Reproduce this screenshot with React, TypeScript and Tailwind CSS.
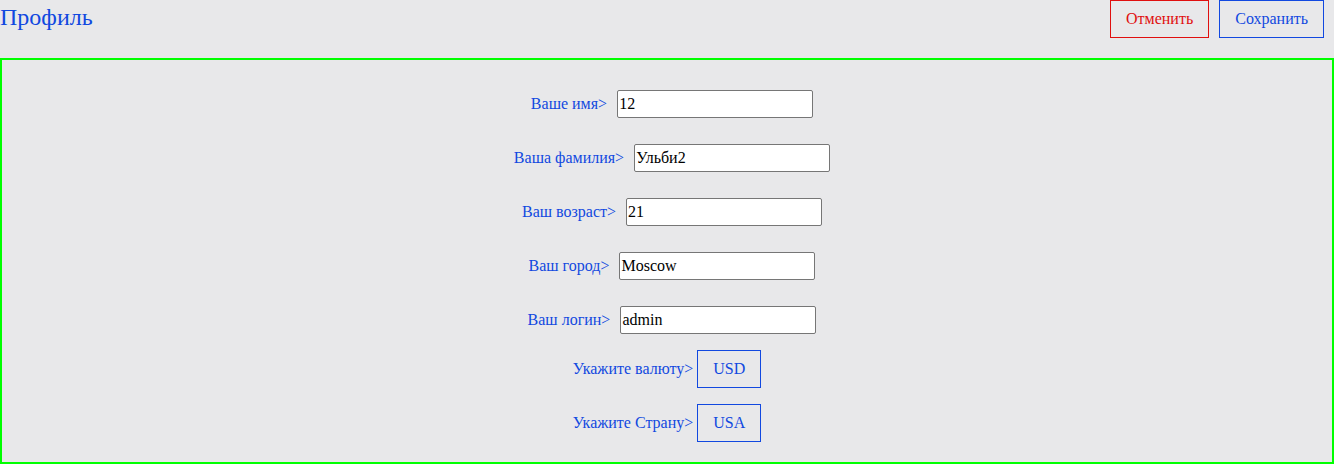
import React from "react";

const serif = { fontFamily: '"Liberation Serif", "Times New Roman", serif' };

const fields = [
  { label: "Ваше имя>", value: "12" },
  { label: "Ваша фамилия>", value: "Ульби2" },
  { label: "Ваш возраст>", value: "21" },
  { label: "Ваш город>", value: "Moscow" },
  { label: "Ваш логин>", value: "admin" },
];

const selects = [
  { label: "Укажите валюту>", value: "USD" },
  { label: "Укажите Страну>", value: "USA" },
];

export default function App() {
  return (
    <div className="w-[1334px] h-[464px] bg-[#e8e8ea] flex flex-col" style={serif}>
      <div className="h-[58px] flex items-start justify-between">
        <div className="text-[24px] leading-none pt-[5px] text-[#1148e0]">Профиль</div>
        <div className="flex gap-[10px] pr-[10px]">
          <button className="h-[38px] px-[15px] border border-[#e00f0f] text-[#e00f0f] text-[16px] bg-transparent">
            Отменить
          </button>
          <button className="h-[38px] px-[15px] border border-[#1148e0] text-[#1148e0] text-[16px] bg-transparent">
            Сохранить
          </button>
        </div>
      </div>
      <div className="flex-1 border-2 border-[#00ff00] flex flex-col items-center pt-[30px]">
        <div className="flex flex-col items-center gap-[26px]">
          {fields.map((f) => (
            <div key={f.label} className="flex items-center h-[28px] pl-[10px]">
              <span className="text-[16px] text-[#1148e0]">{f.label}</span>
              <input
                readOnly
                value={f.value}
                className="ml-[10px] w-[196px] h-[28px] border border-[#767676] rounded-[2px] bg-white px-[1px] text-[16px] text-black outline-none"
                style={serif}
              />
            </div>
          ))}
        </div>
        <div className="flex flex-col items-center gap-[16px] mt-[16px]">
          {selects.map((s) => (
            <div key={s.label} className="flex items-center">
              <span className="text-[16px] text-[#1148e0]">{s.label}</span>
              <div className="ml-[4px] w-[64px] h-[38px] border border-[#1148e0] text-[#1148e0] text-[16px] flex items-center justify-center">
                {s.value}
              </div>
            </div>
          ))}
        </div>
      </div>
    </div>
  );
}
